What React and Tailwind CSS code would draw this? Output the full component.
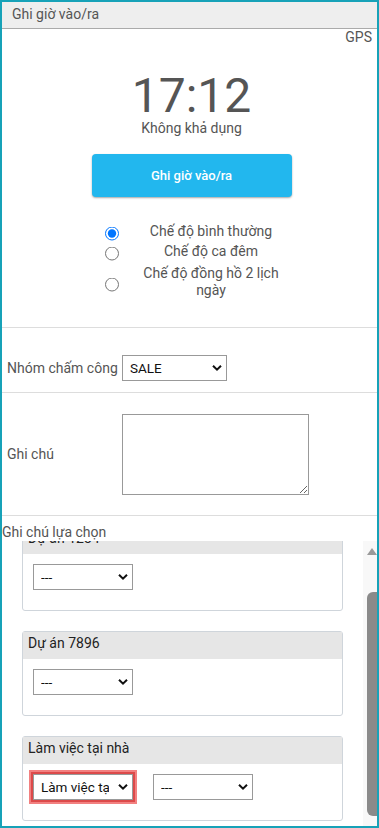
import React from "react";

const Chevron = () => (
  <svg
    width="10"
    height="7"
    viewBox="0 0 10 7"
    className="pointer-events-none absolute right-[5px] top-1/2 -translate-y-1/2"
  >
    <path d="M1 1.2 L5 5.2 L9 1.2" fill="none" stroke="#111" strokeWidth="2" />
  </svg>
);

const Select = ({ value, options, width = "w-[100px]", alert = false }) => (
  <div
    className={`relative ${width} h-[26px] shrink-0 ${
      alert ? "shadow-[0_0_0_2px_#dc4a4a,0_0_0_4px_#f28080]" : ""
    }`}
  >
    <select
      defaultValue={value}
      className="h-full w-full appearance-none border border-[#999] bg-white pl-[7px] pr-[23px] text-[13.5px] text-[#111] outline-none font-['Roboto',sans-serif]"
    >
      {options.map((o) => (
        <option key={o} value={o}>
          {o}
        </option>
      ))}
    </select>
    <Chevron />
  </div>
);

const modes = [
  { label: "Chế độ bình thường", checked: true, pad: "py-[1.5px]" },
  { label: "Chế độ ca đêm", pad: "py-[1.5px]" },
  { label: "Chế độ đồng hồ 2 lịch ngày", pad: "pt-[3.5px] pb-[1.5px]" },
];

const cards = [
  { title: "Dự án 1234", selects: [{ value: "---" }] },
  { title: "Dự án 7896", selects: [{ value: "---" }] },
  {
    title: "Làm việc tại nhà",
    selects: [{ value: "Làm việc tại nhà", alert: true }, { value: "---" }],
  },
];

const Card = ({ title, selects }) => (
  <div className="mb-[20px] rounded-[3px] border border-[#cfd5db] bg-white">
    <div className="h-[27px] bg-[#e6e6e6] px-[5px] pt-[3px] text-[14px] leading-[17px] text-[#222]">
      {title}
    </div>
    <div className="flex gap-[20px] pb-[20px] pl-[10px] pt-[10px]">
      {selects.map((s, i) => (
        <Select
          key={i}
          value={s.value}
          alert={s.alert}
          options={s.value === "---" ? ["---"] : ["---", s.value]}
        />
      ))}
    </div>
  </div>
);

export default function App() {
  return (
    <div className="flex h-[828px] w-[379px] flex-col overflow-hidden border-2 border-[#17a2b8] bg-white font-['Roboto',sans-serif] text-[#555]">
      {/* title bar */}
      <div className="h-[27px] shrink-0 border-b border-[#aaa] bg-[#eee] px-[10px] pt-[1px] text-[14px] leading-[22px]">
        Ghi giờ vào/ra
      </div>

      {/* clock section */}
      <div className="flex shrink-0 flex-col pl-[4px]">
        <div className="pr-[5px] text-right text-[14px] leading-[16px]">GPS</div>
        <div className="mt-[27px] text-center text-[48px] leading-none">17:12</div>
        <div className="text-center text-[14px] leading-[17px]">Không khả dụng</div>
        <button className="mx-auto mt-[17px] flex h-[43px] w-[200px] items-center justify-center rounded-[4px] bg-[#22b7ee] text-[13px] font-medium text-white shadow-[0_1px_2px_rgba(0,0,0,0.35)]">
          Ghi giờ vào/ra
        </button>
        <div className="mb-[27px] ml-[93px] mt-[24px] grid grid-cols-[26px_150px] gap-x-[11px]">
          {modes.map((m) => (
            <React.Fragment key={m.label}>
              <div className={`flex items-center justify-center ${m.pad}`}>
                <input
                  type="radio"
                  name="mode"
                  defaultChecked={m.checked}
                  className="m-0 h-[14px] w-[14px] translate-y-[2.5px]"
                />
              </div>
              <div className={`text-center text-[14px] leading-[17px] ${m.pad}`}>{m.label}</div>
            </React.Fragment>
          ))}
        </div>
      </div>

      {/* form rows */}
      <div className="flex h-[65px] shrink-0 items-center border-t border-[#ddd] pb-[11px] pl-[5px] pt-[27px]">
        <div className="w-[115px] shrink-0 whitespace-nowrap text-[14px]">Nhóm chấm công</div>
        <Select value="SALE" options={["SALE"]} width="w-[105px]" />
      </div>
      <div className="flex h-[124px] shrink-0 items-center border-y border-[#ddd] pl-[5px]">
        <div className="w-[115px] shrink-0 text-[14px]">Ghi chú</div>
        <textarea className="h-[81px] w-[187px] border border-[#999] bg-white outline-none" />
      </div>

      <div className="shrink-0 pt-[7px] text-[14px] leading-[18px]">Ghi chú lựa chọn</div>

      {/* scrollable options */}
      <div className="flex min-h-0 flex-1">
        <div className="min-w-0 flex-1 overflow-hidden px-[20px]">
          <div className="-mt-[15px]">
            {cards.map((c) => (
              <Card key={c.title} {...c} />
            ))}
          </div>
        </div>
        <div className="flex w-[14px] shrink-0 flex-col bg-[#f8f8f8]">
          <svg width="10" height="7" viewBox="0 0 10 7" className="ml-[4px] mt-[7px]">
            <path d="M5 0 L10 7 L0 7 Z" fill="#9a9a9a" />
          </svg>
          <div className="ml-[4px] mt-[37px] h-[224px] w-[10px] rounded-l-[6px] bg-[#8a8a8a]" />
        </div>
      </div>
    </div>
  );
}
